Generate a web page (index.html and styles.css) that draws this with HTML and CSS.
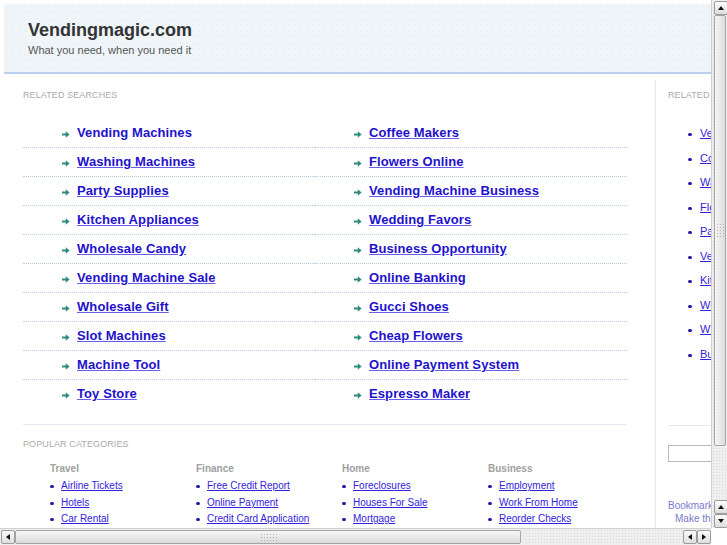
FILE: index.html
```html
<!DOCTYPE html>
<html>

<head lang="en">
    <meta charset="UTF-8">
    <title>Vendingmagic.com</title>
    <link rel="stylesheet" href="styles.css">
</head>

<body>
    <div class="view">
        <div class="page">
            <div class="header">
                <h1 class="site-title">Vendingmagic.com</h1>
                <p class="site-slogan">What you need, when you need it</p>
            </div>
            <div class="main">
                <!-- left part -->
                <div class="left-col">
                    <div class="label">Related Searches</div>
                    <div class="rel-list">
                        <div class="rel-item"><svg class="arrow" width="8" height="7" viewBox="0 0 8 7"><path d="M0 2.6h3.8V0.3L7.6 3.5 3.8 6.7V4.4H0z" fill="#2e8a7e"/></svg><a href="#" class="no-line">Vending Machines</a></div>
                        <div class="rel-item"><svg class="arrow" width="8" height="7" viewBox="0 0 8 7"><path d="M0 2.6h3.8V0.3L7.6 3.5 3.8 6.7V4.4H0z" fill="#2e8a7e"/></svg><a href="#">Coffee Makers</a></div>
                        <div class="rel-item"><svg class="arrow" width="8" height="7" viewBox="0 0 8 7"><path d="M0 2.6h3.8V0.3L7.6 3.5 3.8 6.7V4.4H0z" fill="#2e8a7e"/></svg><a href="#">Washing Machines</a></div>
                        <div class="rel-item"><svg class="arrow" width="8" height="7" viewBox="0 0 8 7"><path d="M0 2.6h3.8V0.3L7.6 3.5 3.8 6.7V4.4H0z" fill="#2e8a7e"/></svg><a href="#">Flowers Online</a></div>
                        <div class="rel-item"><svg class="arrow" width="8" height="7" viewBox="0 0 8 7"><path d="M0 2.6h3.8V0.3L7.6 3.5 3.8 6.7V4.4H0z" fill="#2e8a7e"/></svg><a href="#">Party Supplies</a></div>
                        <div class="rel-item"><svg class="arrow" width="8" height="7" viewBox="0 0 8 7"><path d="M0 2.6h3.8V0.3L7.6 3.5 3.8 6.7V4.4H0z" fill="#2e8a7e"/></svg><a href="#">Vending Machine Business</a></div>
                        <div class="rel-item"><svg class="arrow" width="8" height="7" viewBox="0 0 8 7"><path d="M0 2.6h3.8V0.3L7.6 3.5 3.8 6.7V4.4H0z" fill="#2e8a7e"/></svg><a href="#">Kitchen Appliances</a></div>
                        <div class="rel-item"><svg class="arrow" width="8" height="7" viewBox="0 0 8 7"><path d="M0 2.6h3.8V0.3L7.6 3.5 3.8 6.7V4.4H0z" fill="#2e8a7e"/></svg><a href="#">Wedding Favors</a></div>
                        <div class="rel-item"><svg class="arrow" width="8" height="7" viewBox="0 0 8 7"><path d="M0 2.6h3.8V0.3L7.6 3.5 3.8 6.7V4.4H0z" fill="#2e8a7e"/></svg><a href="#">Wholesale Candy</a></div>
                        <div class="rel-item"><svg class="arrow" width="8" height="7" viewBox="0 0 8 7"><path d="M0 2.6h3.8V0.3L7.6 3.5 3.8 6.7V4.4H0z" fill="#2e8a7e"/></svg><a href="#">Business Opportunity</a></div>
                        <div class="rel-item"><svg class="arrow" width="8" height="7" viewBox="0 0 8 7"><path d="M0 2.6h3.8V0.3L7.6 3.5 3.8 6.7V4.4H0z" fill="#2e8a7e"/></svg><a href="#">Vending Machine Sale</a></div>
                        <div class="rel-item"><svg class="arrow" width="8" height="7" viewBox="0 0 8 7"><path d="M0 2.6h3.8V0.3L7.6 3.5 3.8 6.7V4.4H0z" fill="#2e8a7e"/></svg><a href="#">Online Banking</a></div>
                        <div class="rel-item"><svg class="arrow" width="8" height="7" viewBox="0 0 8 7"><path d="M0 2.6h3.8V0.3L7.6 3.5 3.8 6.7V4.4H0z" fill="#2e8a7e"/></svg><a href="#">Wholesale Gift</a></div>
                        <div class="rel-item"><svg class="arrow" width="8" height="7" viewBox="0 0 8 7"><path d="M0 2.6h3.8V0.3L7.6 3.5 3.8 6.7V4.4H0z" fill="#2e8a7e"/></svg><a href="#">Gucci Shoes</a></div>
                        <div class="rel-item"><svg class="arrow" width="8" height="7" viewBox="0 0 8 7"><path d="M0 2.6h3.8V0.3L7.6 3.5 3.8 6.7V4.4H0z" fill="#2e8a7e"/></svg><a href="#">Slot Machines</a></div>
                        <div class="rel-item"><svg class="arrow" width="8" height="7" viewBox="0 0 8 7"><path d="M0 2.6h3.8V0.3L7.6 3.5 3.8 6.7V4.4H0z" fill="#2e8a7e"/></svg><a href="#">Cheap Flowers</a></div>
                        <div class="rel-item"><svg class="arrow" width="8" height="7" viewBox="0 0 8 7"><path d="M0 2.6h3.8V0.3L7.6 3.5 3.8 6.7V4.4H0z" fill="#2e8a7e"/></svg><a href="#">Machine Tool</a></div>
                        <div class="rel-item"><svg class="arrow" width="8" height="7" viewBox="0 0 8 7"><path d="M0 2.6h3.8V0.3L7.6 3.5 3.8 6.7V4.4H0z" fill="#2e8a7e"/></svg><a href="#">Online Payment System</a></div>
                        <div class="rel-item"><svg class="arrow" width="8" height="7" viewBox="0 0 8 7"><path d="M0 2.6h3.8V0.3L7.6 3.5 3.8 6.7V4.4H0z" fill="#2e8a7e"/></svg><a href="#">Toy Store</a></div>
                        <div class="rel-item"><svg class="arrow" width="8" height="7" viewBox="0 0 8 7"><path d="M0 2.6h3.8V0.3L7.6 3.5 3.8 6.7V4.4H0z" fill="#2e8a7e"/></svg><a href="#">Espresso Maker</a></div>
                    </div>
                    <div class="sep"></div>
                    <div class="label">Popular Categories</div>
                    <div class="cats">
                        <div class="cat">
                            <div class="cat-title">Travel</div>
                            <ul class="dot-list">
                                <li><a href="#">Airline Tickets</a></li>
                                <li><a href="#">Hotels</a></li>
                                <li><a href="#">Car Rental</a></li>
                            </ul>
                        </div>
                        <div class="cat">
                            <div class="cat-title">Finance</div>
                            <ul class="dot-list">
                                <li><a href="#">Free Credit Report</a></li>
                                <li><a href="#">Online Payment</a></li>
                                <li><a href="#">Credit Card Application</a></li>
                            </ul>
                        </div>
                        <div class="cat">
                            <div class="cat-title">Home</div>
                            <ul class="dot-list">
                                <li><a href="#">Foreclosures</a></li>
                                <li><a href="#">Houses For Sale</a></li>
                                <li><a href="#">Mortgage</a></li>
                            </ul>
                        </div>
                        <div class="cat">
                            <div class="cat-title">Business</div>
                            <ul class="dot-list">
                                <li><a href="#">Employment</a></li>
                                <li><a href="#">Work From Home</a></li>
                                <li><a href="#">Reorder Checks</a></li>
                            </ul>
                        </div>
                    </div>
                </div>
                <!-- right part -->
                <div class="right-col">
                    <div class="label">Related Searches</div>
                    <ul class="dot-list side-list">
                        <li><a href="#">Vending Machines</a></li>
                        <li><a href="#">Coffee Makers</a></li>
                        <li><a href="#">Washing Machines</a></li>
                        <li><a href="#">Flowers Online</a></li>
                        <li><a href="#">Party Supplies</a></li>
                        <li><a href="#">Vending Machine Business</a></li>
                        <li><a href="#">Kitchen Appliances</a></li>
                        <li><a href="#">Wedding Favors</a></li>
                        <li><a href="#">Wholesale Candy</a></li>
                        <li><a href="#">Business Opportunity</a></li>
                    </ul>
                    <div class="side-sep"></div>
                    <input type="text" class="search-box">
                    <div class="side-links">
                        <a href="#">Bookmark this page</a>
                        <a href="#" class="indent">Make this your homepage</a>
                    </div>
                </div>
            </div>
        </div>
    </div>
    <!-- scrollbars -->
    <div class="vbar">
        <div class="sb-btn"><span class="tri-up"></span></div>
        <div class="vthumb"><span class="grip-v"></span></div>
        <div class="sb-track"></div>
        <div class="sb-btn"><span class="tri-up"></span></div>
        <div class="sb-btn"><span class="tri-down"></span></div>
    </div>
    <div class="hbar">
        <div class="sb-btn"><span class="tri-left"></span></div>
        <div class="hthumb"><span class="grip-h"></span></div>
        <div class="sb-track"></div>
        <div class="sb-btn"><span class="tri-left"></span></div>
        <div class="sb-btn"><span class="tri-right"></span></div>
    </div>
    <div class="corner"></div>
</body>

</html>
```

FILE: styles.css
```css
* {
    padding: 0px;
    margin: 0px;
}

body {
    width: 727px;
    height: 545px;
    overflow: hidden;
    display: grid;
    grid-template-columns: 711px 16px;
    grid-template-rows: 528px 17px;
    font-family: "Liberation Sans", Arial, sans-serif;
    background: #ffffff;
}

a {
    color: #2211cc;
}

ul {
    list-style: none;
}

.view {
    overflow: hidden;
    background: #ffffff;
}

.page {
    width: 960px;
    padding: 4px 0px 0px 4px;
}

/* header */
.header {
    height: 70px;
    box-sizing: border-box;
    padding: 15px 0px 0px 24px;
    background-color: #eff5f8;
    background-image: radial-gradient(#e3ebf0 0.6px, transparent 0.8px);
    background-size: 6px 6px;
    border-bottom: 2px solid #bccfed;
}

.site-title {
    font-size: 18px;
    line-height: 22px;
    color: #333333;
    font-weight: bold;
}

.site-slogan {
    margin-top: 2px;
    font-size: 11px;
    line-height: 14px;
    color: #555555;
}

.main {
    display: flex;
    margin-top: 6px;
}

.label {
    font-size: 9px;
    line-height: 12px;
    color: #aaaaaa;
    text-transform: uppercase;
    letter-spacing: 0.1px;
}

/* left column */
.left-col {
    width: 604px;
    flex: none;
    padding: 9px 28px 0px 19px;
    border-right: 1px solid #dfe7f2;
    height: 460px;
}

.rel-list {
    margin-top: 18px;
    display: grid;
    grid-template-columns: 292px 312px;
}

.rel-item {
    padding-left: 39px;
    height: 26px;
    line-height: 26px;
    padding-bottom: 2px;
    border-bottom: 1px dotted #b7cdea;
    white-space: nowrap;
}

.rel-item:nth-last-child(-n+2) {
    border-bottom: none;
}

.rel-item .arrow {
    margin-right: 7px;
    vertical-align: -0.5px;
}

.rel-item a {
    font-size: 13px;
    font-weight: bold;
    color: #2211cc;
    text-decoration-color: #6a5ee6;
    letter-spacing: 0.1px;
}

.rel-item a.no-line {
    text-decoration: none;
}

.sep {
    margin-top: 16px;
    margin-bottom: 13px;
    border-top: 1px solid #dfe8f3;
}

.cats {
    display: grid;
    grid-template-columns: repeat(4, 146px);
    padding-left: 27px;
    margin-top: 12px;
}

.cat-title {
    font-size: 10px;
    line-height: 13px;
    font-weight: bold;
    color: #a0a0a0;
}

.dot-list {
    margin-top: 3px;
}

.dot-list li {
    font-size: 10px;
    line-height: 16.5px;
    white-space: nowrap;
}

.dot-list li::before {
    content: "";
    display: inline-block;
    width: 4px;
    height: 3px;
    border-radius: 2px;
    background: #2a1aa8;
    margin-right: 7px;
    vertical-align: 1px;
}

.dot-list a {
    color: #3322dd;
}

/* right column */
.right-col {
    width: 220px;
    flex: none;
    padding: 9px 0px 0px 12px;
}

.side-list {
    margin-top: 20px;
    padding-left: 20px;
}

.side-list li {
    font-size: 11px;
    line-height: 24.5px;
}

.side-list li::before {
    margin-right: 8px;
}

.side-sep {
    margin-top: 59px;
    border-top: 1px solid #dfe8f3;
}

.search-box {
    display: block;
    margin-top: 19px;
    width: 160px;
    height: 17px;
    border: 1px solid #bbbbbb;
    box-sizing: border-box;
}

.side-links {
    margin-top: 37px;
    font-size: 10px;
    line-height: 13px;
}

.side-links a {
    display: block;
    color: #7a7ad0;
    text-decoration: none;
}

.side-links a.indent {
    padding-left: 7px;
}

/* scrollbars */
.vbar,
.hbar {
    display: flex;
    background-color: #efefef;
    background-image: radial-gradient(#d9d9d9 0.6px, transparent 0.8px);
    background-size: 3px 3px;
}

.vbar {
    flex-direction: column;
    padding: 1px 1px 0px 2px;
    border-left: 1px solid #d0d0d0;
}

.hbar {
    padding: 1px 0px 1px 1px;
    border-top: 1px solid #d0d0d0;
}

.corner {
    background: #ffffff;
}

.sb-btn {
    width: 12px;
    height: 12px;
    flex: none;
    border: 1px solid #9c9c9c;
    border-radius: 2px;
    background: linear-gradient(#fbfbfb, #dedede);
    display: flex;
    align-items: center;
    justify-content: center;
}

.sb-track {
    flex: 1;
}

.vthumb {
    height: 429px;
    flex: none;
    border: 1px solid #a4a4a4;
    border-radius: 2px;
    background: linear-gradient(to right, #f6f6f6, #dcdcdc);
    display: flex;
    align-items: center;
    justify-content: center;
}

.hthumb {
    width: 504px;
    flex: none;
    border: 1px solid #a4a4a4;
    border-radius: 2px;
    background: linear-gradient(#f6f6f6, #dcdcdc);
    display: flex;
    align-items: center;
    justify-content: center;
}

.grip-v {
    width: 8px;
    height: 16px;
    background-image: radial-gradient(#b0b0b0 0.7px, transparent 0.9px);
    background-size: 3px 3px;
}

.grip-h {
    width: 17px;
    height: 8px;
    background-image: radial-gradient(#b0b0b0 0.7px, transparent 0.9px);
    background-size: 3px 3px;
}

.tri-up {
    border-left: 3px solid transparent;
    border-right: 3px solid transparent;
    border-bottom: 4px solid #111111;
}

.tri-down {
    border-left: 3px solid transparent;
    border-right: 3px solid transparent;
    border-top: 4px solid #111111;
}

.tri-left {
    border-top: 3px solid transparent;
    border-bottom: 3px solid transparent;
    border-right: 4px solid #111111;
}

.tri-right {
    border-top: 3px solid transparent;
    border-bottom: 3px solid transparent;
    border-left: 4px solid #111111;
}
```
